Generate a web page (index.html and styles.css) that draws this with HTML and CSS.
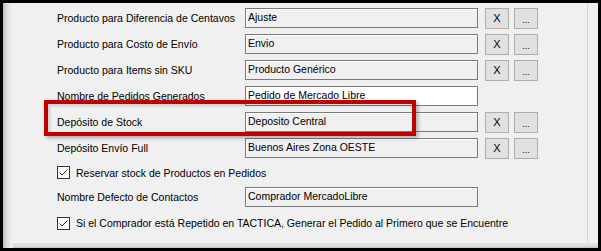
FILE: index.html
```html
<!DOCTYPE html>
<html lang="es">
<head>
<meta charset="utf-8">
<title>Configuración</title>
<link rel="stylesheet" href="styles.css">
</head>
<body>
<div class="window">
  <div class="edge-left"></div>
  <div class="main">
    <div class="content">
      <div class="form">
        <div class="row">
          <span class="label">Producto para Diferencia de Centavos</span>
          <div class="field">Ajuste</div>
          <button class="btn btn-x">X</button>
          <button class="btn btn-dots">...</button>
        </div>
        <div class="row">
          <span class="label">Producto para Costo de Envío</span>
          <div class="field">Envio</div>
          <button class="btn btn-x">X</button>
          <button class="btn btn-dots">...</button>
        </div>
        <div class="row">
          <span class="label">Producto para Items sin SKU</span>
          <div class="field">Producto Genérico</div>
          <button class="btn btn-x">X</button>
          <button class="btn btn-dots">...</button>
        </div>
        <div class="row">
          <span class="label">Nombre de Pedidos Generados</span>
          <div class="field field-edit">Pedido de Mercado Libre</div>
        </div>
        <div class="row">
          <span class="label">Depósito de Stock</span>
          <div class="field">Deposito Central</div>
          <button class="btn btn-x">X</button>
          <button class="btn btn-dots">...</button>
        </div>
        <div class="row">
          <span class="label">Depósito Envío Full</span>
          <div class="field">Buenos Aires Zona OESTE</div>
          <button class="btn btn-x">X</button>
          <button class="btn btn-dots">...</button>
        </div>
        <div class="row row-check">
          <span class="check"><svg width="13" height="13" viewBox="0 0 13 13"><path d="M2.5 6.5 L5 9 L10.5 3.5" fill="none" stroke="#333" stroke-width="1"/></svg></span>
          <span class="check-label">Reservar stock de Productos en Pedidos</span>
        </div>
        <div class="row">
          <span class="label">Nombre Defecto de Contactos</span>
          <div class="field">Comprador MercadoLibre</div>
        </div>
        <div class="row">
          <span class="check"><svg width="13" height="13" viewBox="0 0 13 13"><path d="M2.5 6.5 L5 9 L10.5 3.5" fill="none" stroke="#333" stroke-width="1"/></svg></span>
          <span class="check-label">Si el Comprador está Repetido en TACTICA, Generar el Pedido al Primero que se Encuentre</span>
        </div>
        <div class="highlight"></div>
      </div>
      <div class="vline"></div>
      <div class="rpad"></div>
    </div>
    <div class="bottom"></div>
  </div>
</div>
</body>
</html>
```

FILE: styles.css
```css
html, body {
  margin: 0;
  padding: 0;
  background: #000;
}
body {
  font-family: "Liberation Sans", Arial, sans-serif;
  font-size: 10.5px;
  color: #000;
}
.window {
  box-sizing: border-box;
  width: 601px;
  height: 251px;
  border: 3px solid #000;
  background: #f0f0f0;
  display: flex;
}
.edge-left {
  width: 10px;
  background: linear-gradient(to right, #c4c4c4 0, #c4c4c4 2px, #d6d6d6 2px, #d6d6d6 4px, #e2e2e2 4px, #e2e2e2 6px, #e9e9e9 6px, #e9e9e9 8px, #eeeeee 8px);
}
.main {
  flex: 1;
  display: flex;
  flex-direction: column;
}
.content {
  flex: 1;
  display: flex;
}
.form {
  flex: 1;
  position: relative;
  padding: 2px 0 0 44px;
}
.vline {
  width: 1px;
  background: #d4d4d4;
}
.rpad {
  width: 10px;
}
.bottom {
  height: 5px;
  background: linear-gradient(to bottom, #e6e6e6 0, #e6e6e6 1px, #dadada 1px, #dadada 2px, #e4e4e4 2px, #e4e4e4 3px, #d2d2d2 3px, #d2d2d2 4px, #c8c8c8 4px);
}
.row {
  height: 26px;
  display: flex;
  align-items: center;
}
.row-check {
  height: 23px;
}
.label {
  width: 188px;
  white-space: nowrap;
}
.field {
  box-sizing: border-box;
  width: 233px;
  height: 20px;
  line-height: 17px;
  padding-left: 2px;
  border: 1px solid #7a7a7a;
  box-shadow: inset 1px 1px 0 #ffffff;
  background: #f0f0f0;
  white-space: nowrap;
}
.field-edit {
  background: #ffffff;
}
.btn {
  box-sizing: border-box;
  width: 24px;
  height: 21px;
  padding: 0;
  border: 1px solid #adadad;
  background: #e1e1e1;
  font-family: "Liberation Sans", Arial, sans-serif;
  color: #000;
}
.btn-x {
  margin-left: 7px;
  font-size: 11px;
}
.btn-dots {
  margin-left: 5px;
  font-size: 9px;
  line-height: 14px;
  padding-top: 4px;
}
.check {
  box-sizing: border-box;
  width: 13px;
  height: 13px;
  border: 1px solid #333;
  background: #fff;
  display: flex;
  align-items: center;
  justify-content: center;
}
.check svg {
  display: block;
  flex: none;
}
.check-label {
  margin-left: 6px;
  white-space: nowrap;
}
.highlight {
  position: absolute;
  left: 31px;
  top: 97px;
  width: 372px;
  height: 36px;
  box-sizing: border-box;
  border: 4px solid #c00000;
  box-shadow: 2px 2px 4px rgba(0, 0, 0, 0.3), inset 2px 2px 3px rgba(0, 0, 0, 0.15);
}
```
